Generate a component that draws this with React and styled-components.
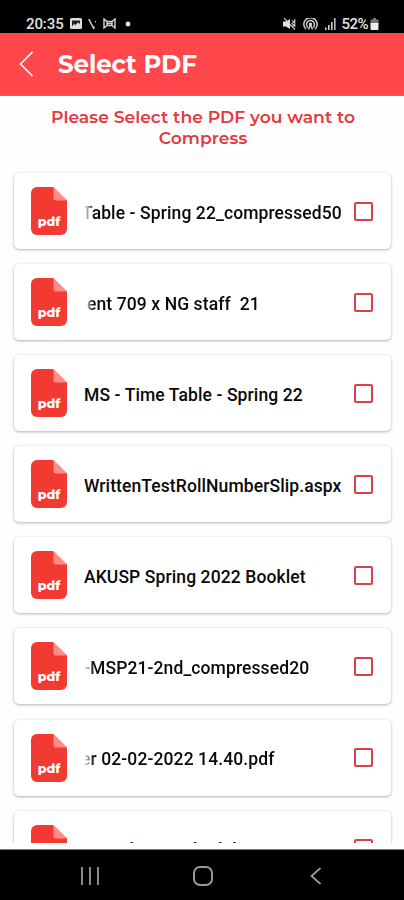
import React, { useState } from "react";
import styled, { createGlobalStyle } from "styled-components";

const GlobalStyle = createGlobalStyle`
  * {
    box-sizing: border-box;
  }

  body {
    margin: 0;
    background: #000;
  }
`;

// Layout
const Screen = styled.div`
  display: flex;
  flex-direction: column;
  width: 404px;
  height: 900px;
  overflow: hidden;
  background: #fefefe;
`;

const StatusBar = styled.div`
  display: flex;
  justify-content: space-between;
  align-items: center;
  flex: none;
  height: 33px;
  padding: 14px 25px 0 26px;
  background: #000;
  color: #e2e2e2;
  font: 500 15px/18px Roboto, sans-serif;
`;

const StatusGroup = styled.div`
  display: flex;
  align-items: center;
  gap: ${(props) => props.$gap}px;
`;

const Clock = styled.span`
  letter-spacing: -0.1px;
`;

const Battery = styled.span`
  display: flex;
  align-items: center;
  gap: 2px;
  margin-left: -2px;
  letter-spacing: -0.5px;
`;

const Header = styled.header`
  display: flex;
  align-items: center;
  flex: none;
  height: 63px;
  padding: 0 19px;
  background: #ff464b;
  border-bottom: 1px solid #f4555a;
`;

const BackButton = styled.button`
  display: flex;
  width: 39px;
  padding: 0;
  border: none;
  background: none;
  cursor: pointer;
`;

const Title = styled.h1`
  margin: 0;
  color: #fff;
  font: 700 24.5px/32px Montserrat, sans-serif;
  letter-spacing: -0.1px;
`;

const Hint = styled.p`
  flex: none;
  height: 69px;
  margin: 0;
  padding: 10px 40px 0 42px;
  color: #e5383f;
  font: 600 17.2px/21px Montserrat, sans-serif;
  letter-spacing: 0.02px;
  text-align: center;
`;

const List = styled.div`
  display: flex;
  flex-direction: column;
  gap: 15.1px;
  height: 678px;
  padding: 8px 13px 0 14px;
  overflow: hidden;
`;

const Card = styled.label`
  display: flex;
  align-items: center;
  flex: none;
  height: 76px;
  padding: 0 18px 0 17px;
  border-radius: 5px;
  background: #fff;
  box-shadow: 0 1px 3px rgba(0, 0, 0, 0.28), 0 0 2px rgba(0, 0, 0, 0.08);
  cursor: pointer;
`;

const FileName = styled.span`
  flex: none;
  width: 258px;
  margin: 3px 12px 0 17px;
  overflow: hidden;
  color: #090909;
  font: 500 17.5px/24px Roboto, sans-serif;
  letter-spacing: 0.1px;
  text-indent: ${(props) => props.$shift || 0}px;
  white-space: pre;
  mask-image: ${(props) =>
    props.$fade ? "linear-gradient(to right, transparent, #000 10px)" : "none"};
`;

const Checkbox = styled.input`
  appearance: none;
  flex: none;
  width: 19px;
  height: 19px;
  margin: 0;
  border: 2px solid #db3f47;
  border-radius: 2px;
  background: #fff;

  &:checked {
    background: #db3f47;
  }
`;

const NavBar = styled.nav`
  display: flex;
  justify-content: space-between;
  align-items: center;
  flex: none;
  height: 51px;
  margin-top: 6px;
  padding: 1px 82px 0 81px;
  border-top: 1px solid #777;
  background: #000;
`;

const HomeIcon = styled.svg`
  margin-right: 4px;
`;

// Icons
const PdfIcon = () => (
  <svg width="36" height="48" viewBox="0 0 36 48">
    <path d="M6 0H22L36 13.5V42a6 6 0 0 1-6 6H6a6 6 0 0 1-6-6V6a6 6 0 0 1 6-6Z" fill="#f23a33" />
    <path d="M22.5 0 36 13.5H25a2.5 2.5 0 0 1-2.5-2.5Z" fill="#ff8c86" />
    <text
      x="18"
      y="38.7"
      fill="#fff"
      fontFamily="Montserrat, sans-serif"
      fontSize="12.5"
      fontWeight="800"
      textAnchor="middle"
    >
      pdf
    </text>
  </svg>
);

const PictureIcon = () => (
  <svg width="12" height="11" viewBox="0 0 12 11">
    <rect width="12" height="11" rx="1.5" fill="#ddd" />
    <path d="M2 8.5V2.5h8V6L8 4.5 5.5 7 4 6Z" fill="#222" />
  </svg>
);

const SlashIcon = () => (
  <svg width="9" height="12" viewBox="0 0 9 12" fill="none" stroke="#ccc" strokeWidth="1.6">
    <path d="M.8 1 6 11" />
    <path d="M6 11V8M7.5 3v1.5" strokeWidth="1" />
  </svg>
);

const BowIcon = () => (
  <svg width="13" height="11" viewBox="0 0 13 11" fill="none" stroke="#ccc" strokeWidth="1.5">
    <path d="M1 1v9l3-2.5h5L12 10V1L9 3.5H4ZM4 3.5v4M9 3.5v4M4 5.5h5" />
  </svg>
);

const MuteIcon = () => (
  <svg width="13" height="12" viewBox="0 0 13 12">
    <path d="M0 3.5h3L7 1v10L3 8.5H0Z" fill="#e2e2e2" />
    <path d="M1 0 12 11.5M9 2.5l2 1.5-2 1.5 2 1.5-2 2M11.8 1v8" fill="none" stroke="#ccc" strokeWidth="1.1" />
  </svg>
);

const HotspotIcon = () => (
  <svg width="15" height="12" viewBox="0 0 15 12" fill="none" stroke="#ccc" strokeWidth="1.5">
    <path d="M3 11.3a6.7 6.7 0 1 1 9 0M4.8 9.5a4 4 0 1 1 5.4 0" />
    <path d="M7.5 6.5 5.5 11.5M7.5 6.5l2 5" />
    <circle cx="7.5" cy="6.2" r="1" fill="#ccc" />
  </svg>
);

const SignalIcon = () => (
  <svg width="11" height="12" viewBox="0 0 11 12">
    <path d="M0 9.5h1.6V12H0ZM3 7h1.6v5H3ZM6 4h1.6v8H6Z" fill="#ccc" />
    <path d="M9 0h1.7v12H9Z" fill="#aaa" />
  </svg>
);

const BatteryIcon = () => (
  <svg width="9" height="12" viewBox="0 0 9 12">
    <path d="M3 0h3v1.5h2.5V6h-8V1.5H3Z" fill="#777" />
    <path d="M.5 5h8v6a1 1 0 0 1-1 1h-6a1 1 0 0 1-1-1Z" fill="#eee" />
  </svg>
);

const files = [
  { name: "Table - Spring 22_compressed50", fade: true, shift: -2 },
  { name: "ent 709 x NG staff  21", fade: true, shift: 3 },
  { name: "MS - Time Table - Spring 22" },
  { name: "WrittenTestRollNumberSlip.aspx" },
  { name: "AKUSP Spring 2022 Booklet" },
  { name: "-MSP21-2nd_compressed20", fade: true, shift: 0 },
  { name: "er 02-02-2022 14.40.pdf", fade: true, shift: -3 },
  { name: "Datesheet  Schedule" },
];

const App = () => {
  const [selected, setSelected] = useState(null);

  return (
    <>
      <GlobalStyle />
      <Screen>
        <StatusBar>
          <StatusGroup $gap={6}>
            <Clock>20:35</Clock>
            <PictureIcon />
            <SlashIcon />
            <BowIcon />
            <svg width="12" height="6" viewBox="0 0 12 6">
              <circle cx="6" cy="3" r="2.4" fill="#eee" />
            </svg>
          </StatusGroup>
          <StatusGroup $gap={7}>
            <MuteIcon />
            <HotspotIcon />
            <SignalIcon />
            <Battery>
              52%
              <BatteryIcon />
            </Battery>
          </StatusGroup>
        </StatusBar>

        <Header>
          <BackButton aria-label="Back">
            <svg width="15" height="26" viewBox="0 0 15 26" fill="none" stroke="#fff" strokeWidth="1.6">
              <path d="M13.5 1 1.5 13l12 12" />
            </svg>
          </BackButton>
          <Title>Select PDF</Title>
        </Header>

        <Hint>Please Select the PDF you want to Compress</Hint>

        <List>
          {files.map((file) => (
            <Card key={file.name}>
              <PdfIcon />
              <FileName $fade={file.fade} $shift={file.shift}>
                {file.name}
              </FileName>
              <Checkbox
                type="checkbox"
                checked={selected === file.name}
                onChange={() => setSelected(selected === file.name ? null : file.name)}
              />
            </Card>
          ))}
        </List>

        <NavBar>
          <svg width="18" height="18" viewBox="0 0 18 18" stroke="#999" strokeWidth="1.8">
            <path d="M1 0v18M9 0v18M17 0v18" />
          </svg>
          <HomeIcon width="20" height="20" viewBox="0 0 20 20" fill="none" stroke="#999" strokeWidth="2">
            <rect x="1" y="1" width="18" height="18" rx="6" />
          </HomeIcon>
          <svg width="12" height="18" viewBox="0 0 12 18" fill="none" stroke="#999" strokeWidth="1.8">
            <path d="M10.5 1 1.5 9l9 8" />
          </svg>
        </NavBar>
      </Screen>
    </>
  );
};

export default App;
